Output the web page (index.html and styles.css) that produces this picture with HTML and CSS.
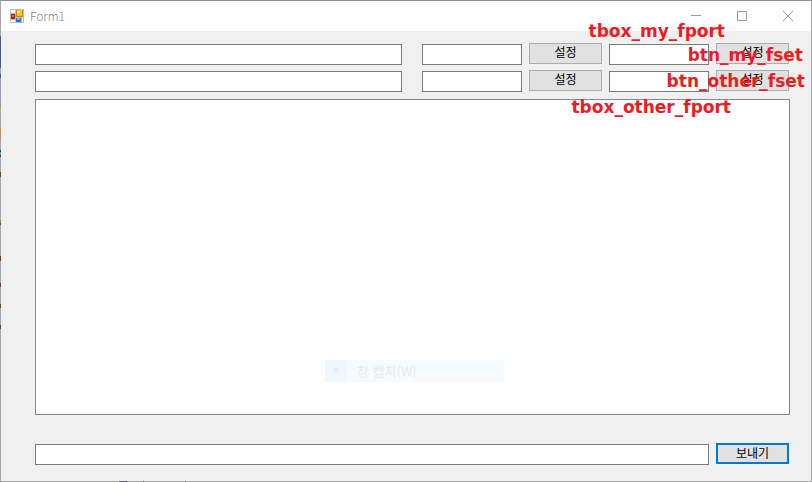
FILE: index.html
```
<!DOCTYPE html>
<html lang="ko">
<head>
    <meta charset="UTF-8">
    <meta name="viewport" content="width=device-width, initial-scale=1.0">
    <title>Form1</title>
    <link rel="stylesheet" href="styles.css">
</head>
<body>
    <div class="window">
        <header class="titlebar">
            <svg class="app-icon" width="14" height="14" viewBox="0 0 14 14" shape-rendering="crispEdges">
                <rect width="14" height="14" fill="#bdbdbd"/>
                <path d="M1 1h4v3h-4zM1 11h4v2h-4zM12 9h1v4h-1z" fill="#fff"/>
                <rect x="1" y="5" width="4" height="5" fill="#a81c14"/>
                <rect x="2" y="6" width="2" height="2" fill="#dc6a58"/>
                <rect x="6" y="1" width="7" height="7" fill="#c98a08"/>
                <rect x="7" y="1" width="5" height="6" fill="#f8c030"/>
                <rect x="7" y="2" width="3" height="2" fill="#ffe48a"/>
                <rect x="6" y="9" width="5" height="4" fill="#2f6fd0"/>
                <rect x="7" y="9" width="3" height="2" fill="#78acf0"/>
            </svg>
            <h1>Form1</h1>
            <div class="window-buttons">
                <button type="button" aria-label="Minimize">
                    <svg width="10" height="10" viewBox="0 0 10 10"><path d="M0 4.5h10"/></svg>
                </button>
                <button type="button" aria-label="Maximize">
                    <svg width="10" height="10" viewBox="0 0 10 10"><path d="M.5.5h9v9h-9z"/></svg>
                </button>
                <button type="button" aria-label="Close">
                    <svg width="10" height="10" viewBox="0 0 10 10"><path d="M0 0l10 10M10 0L0 10"/></svg>
                </button>
            </div>
        </header>

        <form class="form">
            <div class="row">
                <input type="text" class="address" aria-label="my address">
                <input type="text" class="port" aria-label="my port">
                <button type="button" class="btn">설정</button>
                <input type="text" class="port" aria-label="my file port">
                <button type="button" class="btn">설정</button>
            </div>
            <div class="row">
                <input type="text" class="address" aria-label="other address">
                <input type="text" class="port" aria-label="other port">
                <button type="button" class="btn">설정</button>
                <input type="text" class="port" aria-label="other file port">
                <button type="button" class="btn">설정</button>
            </div>

            <div class="log">
                <textarea aria-label="messages" readonly></textarea>
                <div class="menu-ghost"><span class="dot"></span><span class="menu-text">창 캡처(W)</span></div>
            </div>

            <div class="row">
                <input type="text" class="message" aria-label="message">
                <button type="button" class="btn send">보내기</button>
            </div>
        </form>

        <!-- Control name notes -->
        <span class="note my-port">tbox_my_fport</span>
        <span class="note my-set">btn_my_fset</span>
        <span class="note other-set">btn_other_fset</span>
        <span class="note other-port">tbox_other_fport</span>
    </div>
</body>
</html>
```
FILE: styles.css
```
* {
    box-sizing: border-box;
}
body {
    margin: 0;
    font-family: "Noto Sans CJK KR", sans-serif;
    font-size: 12px;
    color: #000;
}
.window {
    position: relative;
    display: flex;
    flex-direction: column;
    min-height: 100vh;
    border: 1px solid #a5a5a8;
    border-top-color: #8f8f9f;
    background-color: #f0f0f0;
}
/* Desktop showing through the left edge */
.window::before {
    content: "";
    position: absolute;
    left: -1px;
    top: 35px;
    width: 1px;
    height: 300px;
    background: linear-gradient(#4a5a85 0 32px, #9a9ab0 32px 38px, #35608a 38px 42px, #9a9ab0 42px 67px, #b09070 67px 72px, #a5a5a8 72px 92px, #c09060 92px 102px, #a5a5a8 102px 114px, #404050 114px 116px, #50a0c8 116px 119px, #404050 119px 121px, #a5a5a8 121px 136px, #704030 136px 141px, #a5a5a8 141px 184px, #b08040 184px 187px, #305080 187px 189px, #a5a5a8 189px 220px, #704030 220px 225px, #a5a5a8 225px 247px, #704030 247px 251px, #a5a5a8 251px 268px, #704030 268px 272px, #a5a5a8 272px 289px, #704030 289px 293px, #a5a5a8 293px);
}
.window::after {
    content: "";
    position: absolute;
    left: 118px;
    bottom: -1px;
    width: 68px;
    height: 1px;
    background: linear-gradient(to right, #606078 0 8px, #a5a5a8 8px 24px, #505058 24px 25px, #a5a5a8 25px 66px, #707078 66px 67px, #a5a5a8 67px);
}
.titlebar {
    display: flex;
    align-items: center;
    height: 30px;
    padding-left: 9px;
    background-color: #fff;
}
.titlebar h1 {
    margin: 0 auto 0 6px;
    padding-bottom: 2px;
    font-size: 12px;
    font-weight: 300;
    color: #888;
}
.window-buttons {
    display: flex;
}
.window-buttons button {
    display: flex;
    align-items: center;
    justify-content: center;
    width: 46px;
    height: 28px;
    padding: 0;
    border: none;
    background: none;
}
.window-buttons path {
    fill: none;
    stroke: #999;
}
.form {
    flex: 1;
    display: flex;
    flex-direction: column;
    padding: 12px 21px 16px 34px;
}
.row {
    display: flex;
    gap: 7px;
    height: 22px;
    margin-bottom: 5px;
    padding-right: 1px;
}
.row:last-child {
    margin-bottom: 0;
}
input {
    align-self: flex-end;
    height: 21px;
    min-width: 0;
    padding: 0 3px;
    border: 1px solid #7a7a7a;
    background-color: #fff;
    font: inherit;
}
.address {
    flex: 1;
    margin-right: 13px;
}
.port {
    width: 100px;
}
.message {
    flex: 1;
}
.btn {
    width: 73px;
    height: 21px;
    padding: 0 0 3px;
    border: 1px solid #adadad;
    background-color: #e1e1e1;
    font: inherit;
    line-height: 16px;
    color: #000;
}
.send {
    border: 2px solid #0078d7;
}
.log {
    position: relative;
    flex: 1;
    display: flex;
    margin: 2px 0 28px;
}
.log textarea {
    flex: 1;
    padding: 3px;
    border: 1px solid #828790;
    background-color: #fff;
    resize: none;
}
/* Faded menu entry over the message area */
.menu-ghost {
    position: absolute;
    left: 290px;
    top: 261px;
    display: flex;
    align-items: center;
    width: 179px;
    height: 22px;
    padding: 0 0 2px 8px;
    background: linear-gradient(to right, #f0f8ff 22px, #f6fbff 22px);
    font-size: 13px;
    color: #e8e8e8;
}
.dot {
    width: 6px;
    height: 6px;
    margin-right: 18px;
    border-radius: 50%;
    background-color: #eeecec;
}
.note {
    position: absolute;
    font-family: "DejaVu Sans", sans-serif;
    font-size: 17px;
    font-weight: bold;
    line-height: 20px;
    color: #ed1c24;
}
.my-port {
    right: 86px;
    top: 20px;
}
.my-set {
    right: 8px;
    top: 44px;
}
.other-set {
    right: 6px;
    top: 70px;
}
.other-port {
    right: 80px;
    top: 96px;
}
```
